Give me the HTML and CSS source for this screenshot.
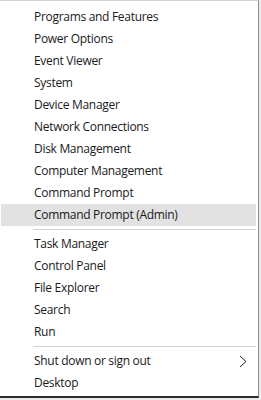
FILE: index.html
```html
<!DOCTYPE html>
<html lang="en">
<head>
  <meta charset="UTF-8" />
  <meta name="viewport" content="width=device-width, initial-scale=1.0" />
  <title>Quick Link Menu</title>
  <link rel="stylesheet" href="styles.css">
</head>
<body>
  <div class="menu">
    <div class="item">Programs and Features</div>
    <div class="item">Power Options</div>
    <div class="item">Event Viewer</div>
    <div class="item">System</div>
    <div class="item">Device Manager</div>
    <div class="item">Network Connections</div>
    <div class="item">Disk Management</div>
    <div class="item">Computer Management</div>
    <div class="item">Command Prompt</div>
    <div class="item active">Command Prompt (Admin)</div>

    <div class="separator"></div>

    <div class="item">Task Manager</div>
    <div class="item">Control Panel</div>
    <div class="item">File Explorer</div>
    <div class="item">Search</div>
    <div class="item">Run</div>

    <div class="separator"></div>

    <div class="item has-sub">
      Shut down or sign out
      <svg class="chevron" width="8" height="13" viewBox="0 0 8 13">
        <polyline points="1,1 7,6.5 1,12" fill="none" stroke="#222" stroke-width="1" />
      </svg>
    </div>
    <div class="item">Desktop</div>
  </div>
</body>
</html>
```

FILE: styles.css
```css
* {
  box-sizing: border-box;
}

body {
  margin: 0;
  background-color: #ececec;
  font-family: "Open Sans", "Noto Sans", sans-serif;
  font-size: 12px;
  letter-spacing: -0.3px;
  color: #1a1a1a;
  height: 400px;
  overflow: hidden;
}

.menu {
  width: 259px;
  height: 398px;
  background-color: #ffffff;
  border-top: 1px solid #d4d4d4;
  border-right: 1px solid #8c8c8c;
  border-bottom: 2px solid #2b2b2b;
  padding-top: 5px;
}

.item {
  height: 22px;
  line-height: 22px;
  padding-left: 33px;
  margin: 0 2px 0 1px;
  white-space: nowrap;
  display: flex;
  align-items: center;
  justify-content: space-between;
}

.item.active {
  background-color: #e2e2e2;
}

.chevron {
  margin-right: 9px;
}

.separator {
  height: 1px;
  background-color: #d2d2d2;
  margin: 3px 2px 3px 33px;
}
```
